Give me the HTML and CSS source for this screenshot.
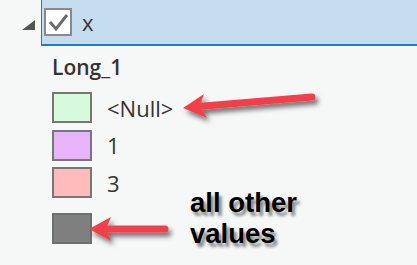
FILE: index.html
```html
<!DOCTYPE html>
<html>
    <head>
        <meta charset="UTF-8">
        <title>Legend</title>
        <link rel="stylesheet" href="styles.css">
    </head>
    <body>
        <div class="tree-row">
            <span class="expander"></span>
            <div class="layer-row">
                <span class="check-box">
                    <svg width="24" height="24" viewBox="0 0 24 24">
                        <polyline points="4,12 10,19 21,5" fill="none" stroke="#6b6b6b" stroke-width="3"/>
                    </svg>
                </span>
                <span class="layer-name">x</span>
            </div>
        </div>

        <div class="legend">
            <div class="field-name">Long_1</div>
            <div class="item"><span class="swatch green"></span><span class="label">&lt;Null&gt;</span></div>
            <div class="item"><span class="swatch purple"></span><span class="label">1</span></div>
            <div class="item"><span class="swatch pink"></span><span class="label">3</span></div>
            <div class="item other"><span class="swatch grey"></span></div>
        </div>

        <div class="note">all other<br>values</div>

        <svg class="arrows" width="417" height="265" viewBox="0 0 417 265">
            <defs>
                <filter id="shadow" x="-20%" y="-50%" width="140%" height="200%">
                    <feDropShadow dx="3" dy="4" stdDeviation="2.5" flood-color="#000" flood-opacity="0.55"/>
                </filter>
            </defs>
            <g filter="url(#shadow)" fill="#f2414b" stroke="#f2414b">
                <line x1="312" y1="97" x2="198" y2="106.5" stroke-width="7" stroke-linecap="round"/>
                <polygon points="183,108 204,94 200,106 207,118" stroke="none"/>
                <line x1="165" y1="229" x2="104" y2="229" stroke-width="7" stroke-linecap="round"/>
                <polygon points="89,229 111,217 106,229 111,241" stroke="none"/>
            </g>
        </svg>
    </body>
</html>
```

FILE: styles.css
```css
body {
    margin: 0;
    width: 417px;
    height: 265px;
    background-color: #f6f7f7;
    font-family: "Open Sans", "Noto Sans", sans-serif;
    color: #333333;
    overflow: hidden;
    position: relative;
}

/* Layer row */
.tree-row {
    display: flex;
    align-items: center;
    height: 46px;
}

.expander {
    width: 0;
    height: 0;
    margin-left: 22px;
    margin-right: 6px;
    margin-top: 4px;
    border-left: 13px solid transparent;
    border-bottom: 10px solid #555555;
}

.layer-row {
    flex: 1;
    height: 44px;
    display: flex;
    align-items: center;
    background-color: #c5dcef;
    border-left: 1px solid #1c7cc0;
    border-bottom: 2px solid #1c7cc0;
}

.check-box {
    width: 24px;
    height: 24px;
    margin-left: 2px;
    border: 2px solid #8a8a8a;
    background-color: #ffffff;
    display: flex;
}

.layer-name {
    margin-left: 10px;
    font-size: 22px;
    line-height: 24px;
}

/* Legend */
.legend {
    padding-left: 52px;
    padding-top: 8px;
}

.field-name {
    font-size: 21px;
    font-weight: 600;
    line-height: 26px;
    margin-bottom: 12px;
}

.item {
    display: flex;
    align-items: center;
    height: 31px;
    margin-bottom: 6.5px;
}

.item.other {
    margin-top: 15px;
}

.swatch {
    width: 36px;
    height: 27px;
    border: 2px solid #767676;
    flex-shrink: 0;
}

.green { background-color: #d6fadb; }
.purple { background-color: #e9b4fa; }
.pink { background-color: #ffbbbb; }
.grey { background-color: #7f7f7f; border-color: #6e6e6e; }

.label {
    margin-left: 15px;
    font-size: 22px;
    line-height: 26px;
}

/* Annotations */
.note {
    position: absolute;
    left: 190px;
    top: 187px;
    font-family: "Liberation Sans", Arial, sans-serif;
    font-weight: bold;
    font-size: 27.5px;
    line-height: 31px;
    color: #000000;
    text-shadow: 3px 4px 3px rgba(0, 0, 0, 0.45);
}

.arrows {
    position: absolute;
    left: 0;
    top: 0;
}
```
